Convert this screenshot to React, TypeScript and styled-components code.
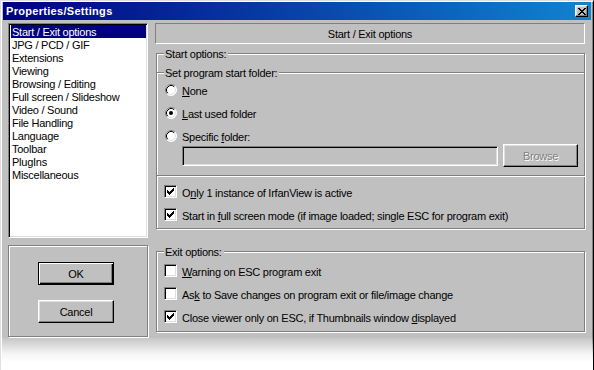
import styled, { createGlobalStyle } from "styled-components";

const GlobalStyle = createGlobalStyle`
  html, body {
    margin: 0;
    padding: 0;
    background: #fff;
  }
  body {
    font-family: "Liberation Sans", Arial, sans-serif;
    font-size: 11px;
    letter-spacing: -0.25px;
    color: #000;
  }
`;

const Window = styled.div`
  position: relative;
  width: 594px;
  height: 370px;
  box-sizing: border-box;
  background: #c0c0c0;
  border-left: 1px solid #dfdfdf;
  border-top: 1px solid #dfdfdf;
  border-right: 1px solid #000;
  box-shadow: inset 1px 1px 0 #fff, inset -1px 0 0 #808080;
  padding: 1px 2px 0 2px;
  display: flex;
  flex-direction: column;
  overflow: hidden;
`;

const Fade = styled.div`
  position: absolute;
  left: 0;
  right: 0;
  top: 337px;
  bottom: 0;
  background: linear-gradient(to bottom, rgba(255, 255, 255, 0.1) 0px, rgba(255, 255, 255, 0.85) 16px, #fff 24px);
  pointer-events: none;
`;

const TitleBar = styled.div`
  height: 18px;
  display: flex;
  align-items: center;
  padding: 0 3px 0 3px;
  background: linear-gradient(to right, #000080, #1084d0);
`;

const Title = styled.span`
  color: #fff;
  font-weight: bold;
  font-size: 11px;
  letter-spacing: 0.3px;
`;

const CloseButton = styled.div`
  margin-left: auto;
  width: 13px;
  height: 12px;
  box-sizing: border-box;
  background: #c0c0c0;
  border: 1px solid;
  border-color: #fff #000 #000 #fff;
  box-shadow: inset -1px -1px 0 #808080, inset 1px 1px 0 #dfdfdf;
  display: flex;
  align-items: center;
  justify-content: center;
`;

const Body = styled.div`
  display: flex;
  gap: 7px;
  padding: 3px 6px 0 5px;
`;

const LeftColumn = styled.div`
  width: 140px;
  display: flex;
  flex-direction: column;
  gap: 7px;
`;

const ListBox = styled.div`
  height: 215px;
  box-sizing: border-box;
  background: #fff;
  border: 1px solid;
  border-color: #808080 #fff #fff #808080;
  box-shadow: inset 1px 1px 0 #000, inset -1px -1px 0 #dfdfdf;
  padding: 1px 1px 1px 2px;
`;

const ListItem = styled.div<{ $selected?: boolean }>`
  height: 13px;
  line-height: 14px;
  padding-left: 1px;
  white-space: nowrap;
  background: ${(p) => (p.$selected ? "#000080" : "transparent")};
  color: ${(p) => (p.$selected ? "#fff" : "#000")};
`;

const ButtonPanel = styled.div`
  height: 92px;
  box-sizing: border-box;
  border: 1px solid #808080;
  box-shadow: inset 1px 1px 0 #fff, 1px 1px 0 #fff;
  padding: 16px 0 0 29px;
  display: flex;
  flex-direction: column;
  gap: 15px;
`;

const Button = styled.div<{ $default?: boolean; $disabled?: boolean; $width?: number }>`
  width: ${(p) => p.$width ?? 76}px;
  height: 23px;
  box-sizing: border-box;
  display: flex;
  align-items: center;
  justify-content: center;
  padding-top: 1px;
  background: #c0c0c0;
  border: 1px solid;
  border-color: ${(p) => (p.$default ? "#000" : "#fff #000 #000 #fff")};
  box-shadow: ${(p) =>
    p.$default
      ? "inset 1px 1px 0 #fff, inset -1px -1px 0 #000, inset -2px -2px 0 #808080"
      : "inset -1px -1px 0 #808080, inset 1px 1px 0 #dfdfdf"};
  color: ${(p) => (p.$disabled ? "#808080" : "#000")};
  text-shadow: ${(p) => (p.$disabled ? "1px 1px 0 #fff" : "none")};
  flex-shrink: 0;
`;

const RightColumn = styled.div`
  width: 430px;
  display: flex;
  flex-direction: column;
`;

const PageHeader = styled.div`
  height: 21px;
  box-sizing: border-box;
  border: 1px solid;
  border-color: #808080 #fff #fff #808080;
  display: flex;
  align-items: center;
  justify-content: center;
  padding-top: 1px;
`;

const Group = styled.div<{ $top: number; $pad: string }>`
  position: relative;
  margin: ${(p) => p.$top}px 0 0 1px;
  border: 1px solid #808080;
  box-shadow: inset 1px 1px 0 #fff, 1px 1px 0 #fff;
  padding: ${(p) => p.$pad};
`;

const SubGroup = styled.div`
  position: relative;
  margin: 0 -1px;
  border: 1px solid #808080;
  box-shadow: inset 1px 1px 0 #fff, 1px 1px 0 #fff;
  padding: 5px 0 8px 0;
`;

const Legend = styled.span`
  position: absolute;
  top: -7px;
  left: 7px;
  padding: 1px 2px 0 1px;
  line-height: 13px;
  background: #c0c0c0;
  white-space: nowrap;
`;

const OptionRow = styled.div<{ $indent?: number }>`
  height: 23px;
  display: flex;
  align-items: center;
  gap: 5px;
  padding-left: ${(p) => p.$indent ?? 7}px;
  white-space: nowrap;
`;

const Label = styled.span`
  padding-top: 2px;
`;

const CheckBox = styled.div`
  width: 13px;
  height: 13px;
  box-sizing: border-box;
  background: #fff;
  border: 1px solid;
  border-color: #808080 #fff #fff #808080;
  box-shadow: inset 1px 1px 0 #000, inset -1px -1px 0 #dfdfdf;
  display: flex;
  align-items: center;
  justify-content: center;
  flex-shrink: 0;
`;

const RadioBox = styled.div`
  width: 13px;
  height: 13px;
  display: flex;
  align-items: center;
  justify-content: flex-end;
  flex-shrink: 0;
`;

const FolderRow = styled.div`
  height: 23px;
  margin-top: -3px;
  display: flex;
  align-items: center;
  gap: 5px;
  padding-left: 25px;
`;

const TextField = styled.div`
  width: 316px;
  height: 20px;
  box-sizing: border-box;
  background: #c0c0c0;
  border: 1px solid;
  border-color: #808080 #fff #fff #808080;
  box-shadow: inset 1px 1px 0 #000, inset -1px -1px 0 #dfdfdf;
`;

const CheckRows = styled.div`
  margin-top: 4px;
`;

function CheckMark() {
  const cols = [2, 3, 4, 3, 2, 1, 0];
  return (
    <svg width="7" height="7" viewBox="0 0 7 7" shapeRendering="crispEdges">
      <path d={cols.map((y, x) => `M${x} ${y}h1v3h-1z`).join("")} fill="#000" />
    </svg>
  );
}

function CloseGlyph() {
  const rows: [number, number][][] = [
    [[0, 2], [6, 2]],
    [[1, 2], [5, 2]],
    [[2, 4]],
    [[3, 2]],
    [[2, 4]],
    [[1, 2], [5, 2]],
    [[0, 2], [6, 2]],
  ];
  const d = rows
    .map((runs, y) => runs.map(([x, w]) => `M${x} ${y}h${w}v1h-${w}z`).join(""))
    .join("");
  return (
    <svg width="8" height="7" viewBox="0 0 8 7" shapeRendering="crispEdges">
      <path d={d} fill="#000" />
    </svg>
  );
}

function Check({ checked, label }: { checked?: boolean; label: React.ReactNode }) {
  return (
    <OptionRow>
      <CheckBox>{checked && <CheckMark />}</CheckBox>
      <Label>{label}</Label>
    </OptionRow>
  );
}

function Radio({ checked, label }: { checked?: boolean; label: React.ReactNode }) {
  return (
    <OptionRow $indent={7}>
      <RadioBox>
        <svg width="12" height="12" viewBox="0 0 12 12">
          <circle cx="6" cy="6" r="5.5" fill="#fff" />
          <path d="M2.11 9.89 A5.5 5.5 0 0 1 9.89 2.11" stroke="#808080" fill="none" />
          <path d="M9.89 2.11 A5.5 5.5 0 0 1 2.11 9.89" stroke="#fff" fill="none" />
          <path d="M2.82 9.18 A4.5 4.5 0 0 1 9.18 2.82" stroke="#000" fill="none" />
          <path d="M9.18 2.82 A4.5 4.5 0 0 1 2.82 9.18" stroke="#dfdfdf" fill="none" />
          {checked && <circle cx="6" cy="6" r="2" fill="#000" />}
        </svg>
      </RadioBox>
      <Label>{label}</Label>
    </OptionRow>
  );
}

const pages = [
  "Start / Exit options",
  "JPG / PCD / GIF",
  "Extensions",
  "Viewing",
  "Browsing / Editing",
  "Full screen / Slideshow",
  "Video / Sound",
  "File Handling",
  "Language",
  "Toolbar",
  "PlugIns",
  "Miscellaneous",
];

export default function App() {
  return (
    <>
      <GlobalStyle />
      <Window>
        <TitleBar>
          <Title>Properties/Settings</Title>
          <CloseButton>
            <CloseGlyph />
          </CloseButton>
        </TitleBar>
        <Body>
          <LeftColumn>
            <ListBox>
              {pages.map((p, i) => (
                <ListItem key={p} $selected={i === 0}>
                  {p}
                </ListItem>
              ))}
            </ListBox>
            <ButtonPanel>
              <Button $default>OK</Button>
              <Button>Cancel</Button>
            </ButtonPanel>
          </LeftColumn>
          <RightColumn>
            <PageHeader>Start / Exit options</PageHeader>
            <Group $top={9} $pad="18px 0 2px 0">
              <Legend>Start options:</Legend>
              <SubGroup>
                <Legend>Set program start folder:</Legend>
                <Radio label={<><u>N</u>one</>} />
                <Radio checked label={<><u>L</u>ast used folder</>} />
                <Radio label={<>Specific <u>f</u>older:</>} />
                <FolderRow>
                  <TextField />
                  <Button $disabled $width={75}>Browse</Button>
                </FolderRow>
              </SubGroup>
              <CheckRows>
                <Check checked label={<>O<u>n</u>ly 1 instance of IrfanView is active</>} />
                <Check
                  checked
                  label={<>Start in <u>f</u>ull screen mode (if image loaded; single ESC for program exit)</>}
                />
              </CheckRows>
            </Group>
            <Group $top={22} $pad="7px 0 3px 0">
              <Legend>Exit options:</Legend>
              <Check label={<><u>W</u>arning on ESC program exit</>} />
              <Check label={<>As<u>k</u> to Save changes on program exit or file/image change</>} />
              <Check checked label={<>Close viewer only on ESC, if Thumbnails window <u>d</u>isplayed</>} />
            </Group>
          </RightColumn>
        </Body>
        <Fade />
      </Window>
    </>
  );
}
